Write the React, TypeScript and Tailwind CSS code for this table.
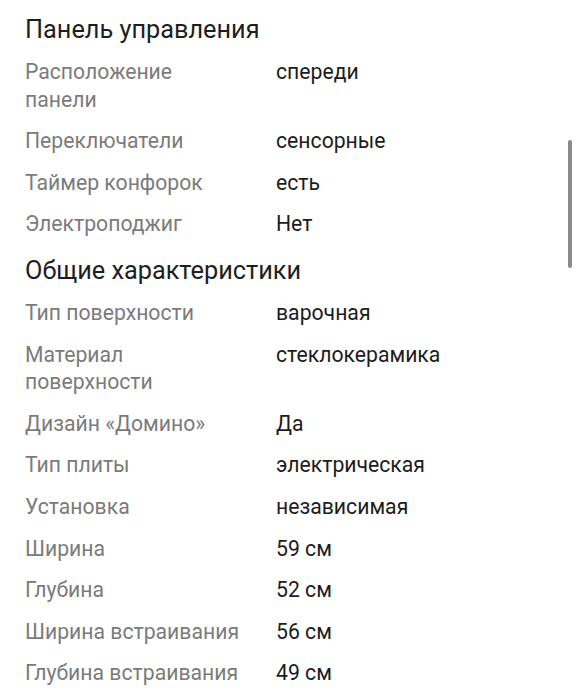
const sections = [
  {
    title: "Панель управления",
    rows: [
      ["Расположение панели", "спереди"],
      ["Переключатели", "сенсорные"],
      ["Таймер конфорок", "есть"],
      ["Электроподжиг", "Нет"],
    ],
  },
  {
    title: "Общие характеристики",
    rows: [
      ["Тип поверхности", "варочная"],
      ["Материал поверхности", "стеклокерамика"],
      ["Дизайн «Домино»", "Да"],
      ["Тип плиты", "электрическая"],
      ["Установка", "независимая"],
      ["Ширина", "59 см"],
      ["Глубина", "52 см"],
      ["Ширина встраивания", "56 см"],
      ["Глубина встраивания", "49 см"],
    ],
  },
];

export default function App() {
  return (
    <div className="relative h-[699px] w-[576px] overflow-hidden bg-white font-['Roboto',sans-serif]">
      <div className="flex flex-col gap-[10px] px-[25px] pt-[14px]">
        {sections.map((s) => (
          <div key={s.title} className="flex flex-col">
            <h2 className="mb-[5px] text-[25.3px] leading-[32px] text-[#1e1e1e]">{s.title}</h2>
            {s.rows.map(([label, value]) => (
              <div key={label} className="flex py-[7px] text-[21.2px] leading-[27.6px]">
                <div className="w-[251px] shrink-0">
                  <div className="max-w-[218px] text-[#7b7b7b]">{label}</div>
                </div>
                <div className="text-[#1c1c1c]">{value}</div>
              </div>
            ))}
          </div>
        ))}
      </div>
      <div className="absolute left-[568px] top-[140px] h-[128px] w-[4px] rounded-full bg-[#8a8a8a]" />
    </div>
  );
}
